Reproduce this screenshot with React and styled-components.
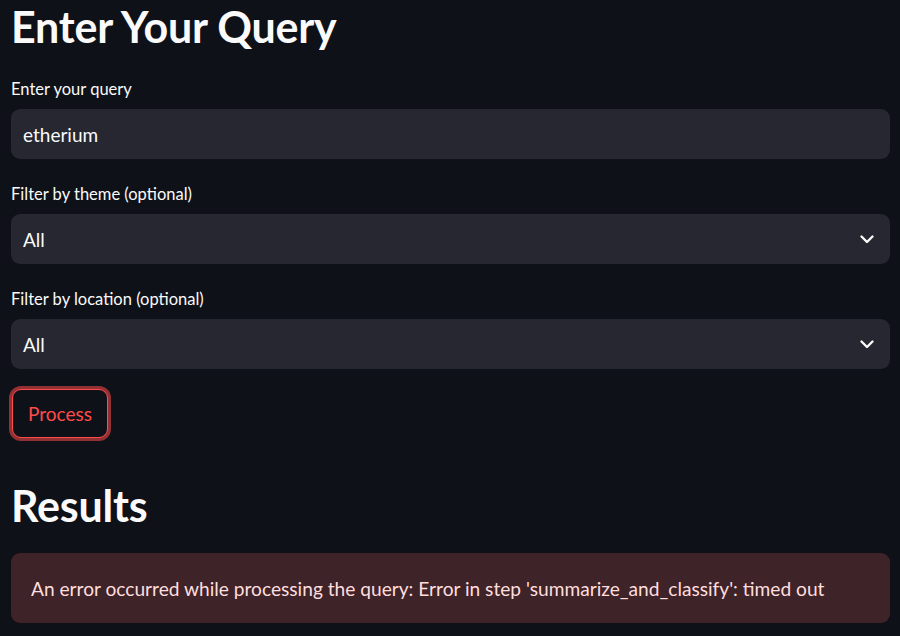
import React from "react";
import styled, { createGlobalStyle } from "styled-components";

const GlobalStyle = createGlobalStyle`
  html, body {
    margin: 0;
    padding: 0;
    background: #0e1117;
  }
  body {
    font-family: Lato, "Noto Sans", sans-serif;
    color: #fafafa;
  }
`;

const Page = styled.main`
  box-sizing: border-box;
  width: 900px;
  padding: 0 10px 0 11px;
`;

const Title = styled.h1`
  margin: 0;
  font-size: 43px;
  line-height: 54px;
  font-weight: 700;
  letter-spacing: -0.2px;
`;

const Field = styled.div`
  display: flex;
  flex-direction: column;
  margin-top: ${props => props.$top || 23}px;
`;

const Label = styled.label`
  font-size: 16.5px;
  line-height: 24px;
  margin-bottom: 8px;
  color: #fafafa;
`;

const Box = styled.div`
  box-sizing: border-box;
  height: 50px;
  display: flex;
  align-items: center;
  justify-content: space-between;
  background: #262730;
  border-radius: 9px;
  padding: 0 13px 0 12px;
  font-size: 19px;
  color: #fafafa;
`;

const Chevron = () => (
  <svg width="20" height="20" viewBox="0 0 20 20" fill="none">
    <path
      d="M4.5 7.5 L10 13 L15.5 7.5"
      stroke="#fafafa"
      strokeWidth="2.4"
      strokeLinecap="round"
      strokeLinejoin="round"
    />
  </svg>
);

const Actions = styled.div`
  margin-top: 20px;
  display: flex;
`;

const Button = styled.button`
  box-sizing: border-box;
  height: 49px;
  padding: 0 15px;
  margin: 0 1px;
  border: 1px solid #ff4b4b;
  border-radius: 9px;
  background: #0e1117;
  color: #ff4b4b;
  font-family: inherit;
  font-size: 19px;
  box-shadow: 0 0 0 3px rgba(255, 75, 75, 0.55);
  cursor: pointer;
`;

const Subtitle = styled.h2`
  margin: 42px 0 0;
  font-size: 43px;
  line-height: 52px;
  font-weight: 700;
  letter-spacing: -0.2px;
`;

const ErrorBox = styled.div`
  box-sizing: border-box;
  margin-top: 21px;
  height: 70px;
  display: flex;
  align-items: center;
  padding: 0 20px;
  border-radius: 9px;
  background: rgba(255, 108, 108, 0.2);
  color: #ffdede;
  font-size: 19.15px;
`;

const SelectField = ({ label, value }) => (
  <Field>
    <Label>{label}</Label>
    <Box>
      <span>{value}</span>
      <Chevron />
    </Box>
  </Field>
);

const App = () => (
  <>
    <GlobalStyle />
    <Page>
      <Title>Enter Your Query</Title>
      <Field $top={23}>
        <Label>Enter your query</Label>
        <Box>etherium</Box>
      </Field>
      <SelectField label="Filter by theme (optional)" value="All" />
      <SelectField label="Filter by location (optional)" value="All" />
      <Actions>
        <Button>Process</Button>
      </Actions>
      <Subtitle>Results</Subtitle>
      <ErrorBox>
        An error occurred while processing the query: Error in step
        'summarize_and_classify': timed out
      </ErrorBox>
    </Page>
  </>
);

export default App;
